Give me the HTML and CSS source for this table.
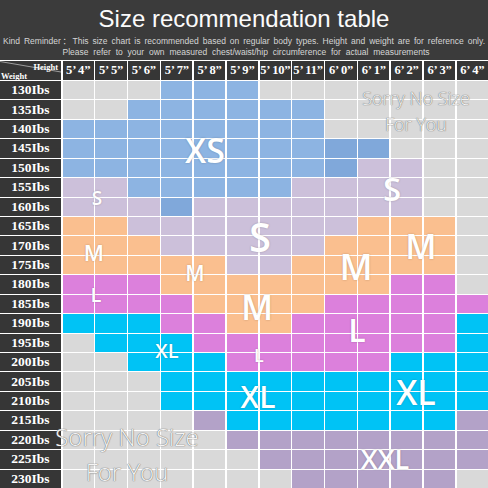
FILE: index.html
```html
<!DOCTYPE html>
<html>
<head>
<meta charset="utf-8">
<link rel="stylesheet" href="styles.css">
</head>
<body>
<div class="page">
  <header class="top">
    <h1 class="title">Size recommendation table</h1>
    <p class="note note1">Kind Reminder：This size chart is recommended based on regular body types. Height and weight are for reference only.</p>
    <p class="note note2">Please refer to your own measured chest/waist/hip circumference for actual measurements</p>
  </header>
  <div class="chart">
    <div class="grid">
      <div class="corner">
        <svg class="diag" viewBox="0 0 61 19" preserveAspectRatio="none"><line x1="0" y1="0.5" x2="61" y2="11" stroke="#b8b8b8" stroke-width="0.8"/></svg>
        <span class="c-h">Height</span>
        <span class="c-w">Weight</span>
      </div>
      <div class="hd">5’ 4”</div><div class="hd">5’ 5”</div><div class="hd">5’ 6”</div><div class="hd">5’ 7”</div><div class="hd">5’ 8”</div><div class="hd">5’ 9”</div><div class="hd">5’ 10”</div><div class="hd">5’ 11”</div><div class="hd">6’ 0”</div><div class="hd">6’ 1”</div><div class="hd">6’ 2”</div><div class="hd">6’ 3”</div><div class="hd">6’ 4”</div>

      <div class="rl">130Ibs</div><i class="g"></i><i class="g"></i><i class="g"></i><i class="b"></i><i class="b"></i><i class="b"></i><i class="g"></i><i class="g"></i><i class="g"></i><i class="g"></i><i class="g"></i><i class="g"></i><i class="g"></i>
      <div class="rl">135Ibs</div><i class="g"></i><i class="g"></i><i class="b"></i><i class="b"></i><i class="b"></i><i class="b"></i><i class="b"></i><i class="b"></i><i class="g"></i><i class="g"></i><i class="g"></i><i class="g"></i><i class="g"></i>
      <div class="rl">140Ibs</div><i class="b"></i><i class="b"></i><i class="b"></i><i class="b"></i><i class="b"></i><i class="b"></i><i class="b"></i><i class="b"></i><i class="g"></i><i class="g"></i><i class="g"></i><i class="g"></i><i class="g"></i>
      <div class="rl">145Ibs</div><i class="b"></i><i class="b"></i><i class="b"></i><i class="b"></i><i class="b"></i><i class="b"></i><i class="b"></i><i class="b"></i><i class="d"></i><i class="d"></i><i class="g"></i><i class="g"></i><i class="g"></i>
      <div class="rl">150Ibs</div><i class="b"></i><i class="b"></i><i class="b"></i><i class="b"></i><i class="b"></i><i class="b"></i><i class="b"></i><i class="b"></i><i class="d"></i><i class="s"></i><i class="s"></i><i class="g"></i><i class="g"></i>
      <div class="rl">155Ibs</div><i class="s"></i><i class="s"></i><i class="b"></i><i class="b"></i><i class="b"></i><i class="b"></i><i class="b"></i><i class="s"></i><i class="s"></i><i class="s"></i><i class="s"></i><i class="g"></i><i class="g"></i>
      <div class="rl">160Ibs</div><i class="s"></i><i class="s"></i><i class="s"></i><i class="d"></i><i class="s"></i><i class="s"></i><i class="s"></i><i class="s"></i><i class="s"></i><i class="s"></i><i class="s"></i><i class="g"></i><i class="g"></i>
      <div class="rl">165Ibs</div><i class="m"></i><i class="m"></i><i class="s"></i><i class="s"></i><i class="s"></i><i class="s"></i><i class="s"></i><i class="s"></i><i class="s"></i><i class="m"></i><i class="m"></i><i class="m"></i><i class="g"></i>
      <div class="rl">170Ibs</div><i class="m"></i><i class="m"></i><i class="m"></i><i class="s"></i><i class="s"></i><i class="s"></i><i class="s"></i><i class="s"></i><i class="m"></i><i class="m"></i><i class="m"></i><i class="m"></i><i class="g"></i>
      <div class="rl">175Ibs</div><i class="m"></i><i class="m"></i><i class="m"></i><i class="m"></i><i class="m"></i><i class="s"></i><i class="s"></i><i class="m"></i><i class="m"></i><i class="m"></i><i class="m"></i><i class="m"></i><i class="g"></i>
      <div class="rl">180Ibs</div><i class="l"></i><i class="l"></i><i class="l"></i><i class="m"></i><i class="m"></i><i class="m"></i><i class="m"></i><i class="m"></i><i class="m"></i><i class="m"></i><i class="l"></i><i class="l"></i><i class="g"></i>
      <div class="rl">185Ibs</div><i class="l"></i><i class="l"></i><i class="l"></i><i class="l"></i><i class="m"></i><i class="m"></i><i class="m"></i><i class="m"></i><i class="l"></i><i class="l"></i><i class="l"></i><i class="l"></i><i class="l"></i>
      <div class="rl">190Ibs</div><i class="x"></i><i class="x"></i><i class="x"></i><i class="l"></i><i class="l"></i><i class="m"></i><i class="m"></i><i class="l"></i><i class="l"></i><i class="l"></i><i class="l"></i><i class="l"></i><i class="x"></i>
      <div class="rl">195Ibs</div><i class="g"></i><i class="x"></i><i class="x"></i><i class="x"></i><i class="l"></i><i class="l"></i><i class="l"></i><i class="l"></i><i class="l"></i><i class="l"></i><i class="l"></i><i class="l"></i><i class="x"></i>
      <div class="rl">200Ibs</div><i class="g"></i><i class="g"></i><i class="x"></i><i class="x"></i><i class="x"></i><i class="l"></i><i class="l"></i><i class="l"></i><i class="l"></i><i class="l"></i><i class="x"></i><i class="x"></i><i class="x"></i>
      <div class="rl">205Ibs</div><i class="g"></i><i class="g"></i><i class="g"></i><i class="x"></i><i class="x"></i><i class="x"></i><i class="x"></i><i class="x"></i><i class="x"></i><i class="x"></i><i class="x"></i><i class="x"></i><i class="x"></i>
      <div class="rl">210Ibs</div><i class="g"></i><i class="g"></i><i class="g"></i><i class="x"></i><i class="x"></i><i class="x"></i><i class="x"></i><i class="x"></i><i class="x"></i><i class="x"></i><i class="x"></i><i class="x"></i><i class="x"></i>
      <div class="rl">215Ibs</div><i class="g"></i><i class="g"></i><i class="g"></i><i class="g"></i><i class="p"></i><i class="x"></i><i class="x"></i><i class="x"></i><i class="x"></i><i class="x"></i><i class="x"></i><i class="x"></i><i class="p"></i>
      <div class="rl">220Ibs</div><i class="g"></i><i class="g"></i><i class="g"></i><i class="g"></i><i class="g"></i><i class="p"></i><i class="p"></i><i class="p"></i><i class="p"></i><i class="p"></i><i class="p"></i><i class="p"></i><i class="p"></i>
      <div class="rl">225Ibs</div><i class="g"></i><i class="g"></i><i class="g"></i><i class="g"></i><i class="g"></i><i class="g"></i><i class="p"></i><i class="p"></i><i class="p"></i><i class="p"></i><i class="p"></i><i class="p"></i><i class="p"></i>
      <div class="rl">230Ibs</div><i class="g"></i><i class="g"></i><i class="g"></i><i class="g"></i><i class="g"></i><i class="g"></i><i class="g"></i><i class="p"></i><i class="p"></i><i class="p"></i><i class="p"></i><i class="p"></i><i class="g"></i>
    </div>

    <span class="tag t-xs">XS</span>
    <span class="tag t-s1">S</span>
    <span class="tag t-s2">S</span>
    <span class="tag t-s3">S</span>
    <span class="tag t-m1">M</span>
    <span class="tag t-m2">M</span>
    <span class="tag t-m3">M</span>
    <span class="tag t-m4">M</span>
    <span class="tag t-m5">M</span>
    <span class="tag t-l1">L</span>
    <span class="tag t-l2">L</span>
    <span class="tag t-l3">L</span>
    <span class="tag t-xl1">XL</span>
    <span class="tag t-xl2">XL</span>
    <span class="tag t-xl3">XL</span>
    <span class="tag t-xxl">XXL</span>
    <span class="sorry sorry-a">Sorry No Size<br>For You</span>
    <span class="sorry sorry-b">Sorry No Size<br>For You</span>
  </div>
</div>
</body>
</html>
```

FILE: styles.css
```css
* { box-sizing: border-box; }
html, body { margin: 0; padding: 0; }
body { width: 488px; height: 488px; overflow: hidden; background: #3b3b3b; }

.page { width: 488px; height: 488px; }

.top {
  height: 60px;
  padding-top: 5px;
  background: #3b3b3b;
  color: #fff;
  font-family: "Liberation Sans", Arial, "Noto Sans CJK SC", sans-serif;
}
.title {
  margin: 0;
  font-size: 24px;
  font-weight: 400;
  line-height: 28px;
  text-align: center;
  color: #fbfbfb;
}
.note {
  margin: 0;
  font-size: 8.5px;
  line-height: 11px;
  color: #d6d6d6;
  white-space: nowrap;
}
.note1 {
  margin-top: 3px;
  padding: 0 3px;
  text-align: justify;
  text-align-last: justify;
}
.note2 {
  text-align: center;
  word-spacing: 2.5px;
  padding-left: 4px;
}

.chart { position: relative; }

.grid {
  display: grid;
  grid-template-columns: 61px repeat(13, 1fr);
  grid-template-rows: 19px repeat(21, 1fr);
  column-gap: 1.5px;
  row-gap: 1px;
  height: 428px;
  padding-top: 1px;
  background: #fff;
}
.grid > i { display: block; }

.corner {
  position: relative;
  background: #363636;
  color: #fff;
  font-family: "Liberation Serif", "DejaVu Serif", serif;
  font-weight: 700;
  font-size: 8.5px;
  line-height: 1;
}
.diag { position: absolute; left: 0; top: 0; width: 100%; height: 100%; }
.c-h { position: absolute; right: 3px; top: 2px; }
.c-w { position: absolute; left: 1px; bottom: 0; }

.hd {
  background: #363636;
  color: #fff;
  font-family: "Liberation Serif", "DejaVu Serif", serif;
  font-weight: 700;
  font-size: 12.5px;
  display: flex;
  align-items: center;
  justify-content: center;
  white-space: nowrap;
  letter-spacing: -0.2px;
}
.rl {
  background: #363636;
  color: #fff;
  font-family: "Liberation Serif", "DejaVu Serif", serif;
  font-weight: 700;
  font-size: 13.5px;
  display: flex;
  align-items: center;
  justify-content: center;
  white-space: nowrap;
}

.g { background: #d9d9d9; }
.b { background: #8db4e2; }
.d { background: #80a8da; }
.s { background: #ccc0da; }
.m { background: #fabf8f; }
.l { background: #dc80dc; }
.x { background: #00c3f5; }
.p { background: #b3a2c8; }

.tag {
  position: absolute;
  transform: translate(-50%, -50%);
  font-family: "Open Sans", "Noto Sans", sans-serif;
  font-weight: 600;
  line-height: 1;
  color: #fff;
  white-space: nowrap;
  text-shadow: 0 0 2px rgba(0, 0, 0, 0.25);
}
.t-xs  { left: 205px; top: 90px;  font-size: 34px; }
.t-s1  { left: 97px;  top: 138px; font-size: 19px; }
.t-s2  { left: 392px; top: 128px; font-size: 33px; }
.t-s3  { left: 260px; top: 177px; font-size: 40px; }
.t-m1  { left: 94px;  top: 192px; font-size: 22px; }
.t-m2  { left: 195px; top: 213px; font-size: 21px; }
.t-m3  { left: 356px; top: 207px; font-size: 36px; }
.t-m4  { left: 421px; top: 186px; font-size: 34px; }
.t-m5  { left: 257px; top: 246px; font-size: 35px; }
.t-l1  { left: 96px;  top: 235px; font-size: 20px; }
.t-l2  { left: 357px; top: 270px; font-size: 32px; }
.t-l3  { left: 259px; top: 295px; font-size: 18px; }
.t-xl1 { left: 167px; top: 291px; font-size: 20px; }
.t-xl2 { left: 258px; top: 337px; font-size: 30px; }
.t-xl3 { left: 416px; top: 332px; font-size: 34px; }
.t-xxl { left: 385px; top: 398px; font-size: 27px; }

.sorry {
  position: absolute;
  transform: translate(-50%, -50%);
  font-family: "Open Sans", "Noto Sans", sans-serif;
  font-weight: 300;
  color: #f4f4f4;
  text-align: center;
  white-space: nowrap;
  text-shadow: 0 0 1px #6f6f6f, 0 0 1px #6f6f6f;
}
.sorry-a { left: 416px; top: 51px; font-size: 18px; line-height: 26px; }
.sorry-b { left: 127px; top: 394px; font-size: 24px; line-height: 35px; }
```
